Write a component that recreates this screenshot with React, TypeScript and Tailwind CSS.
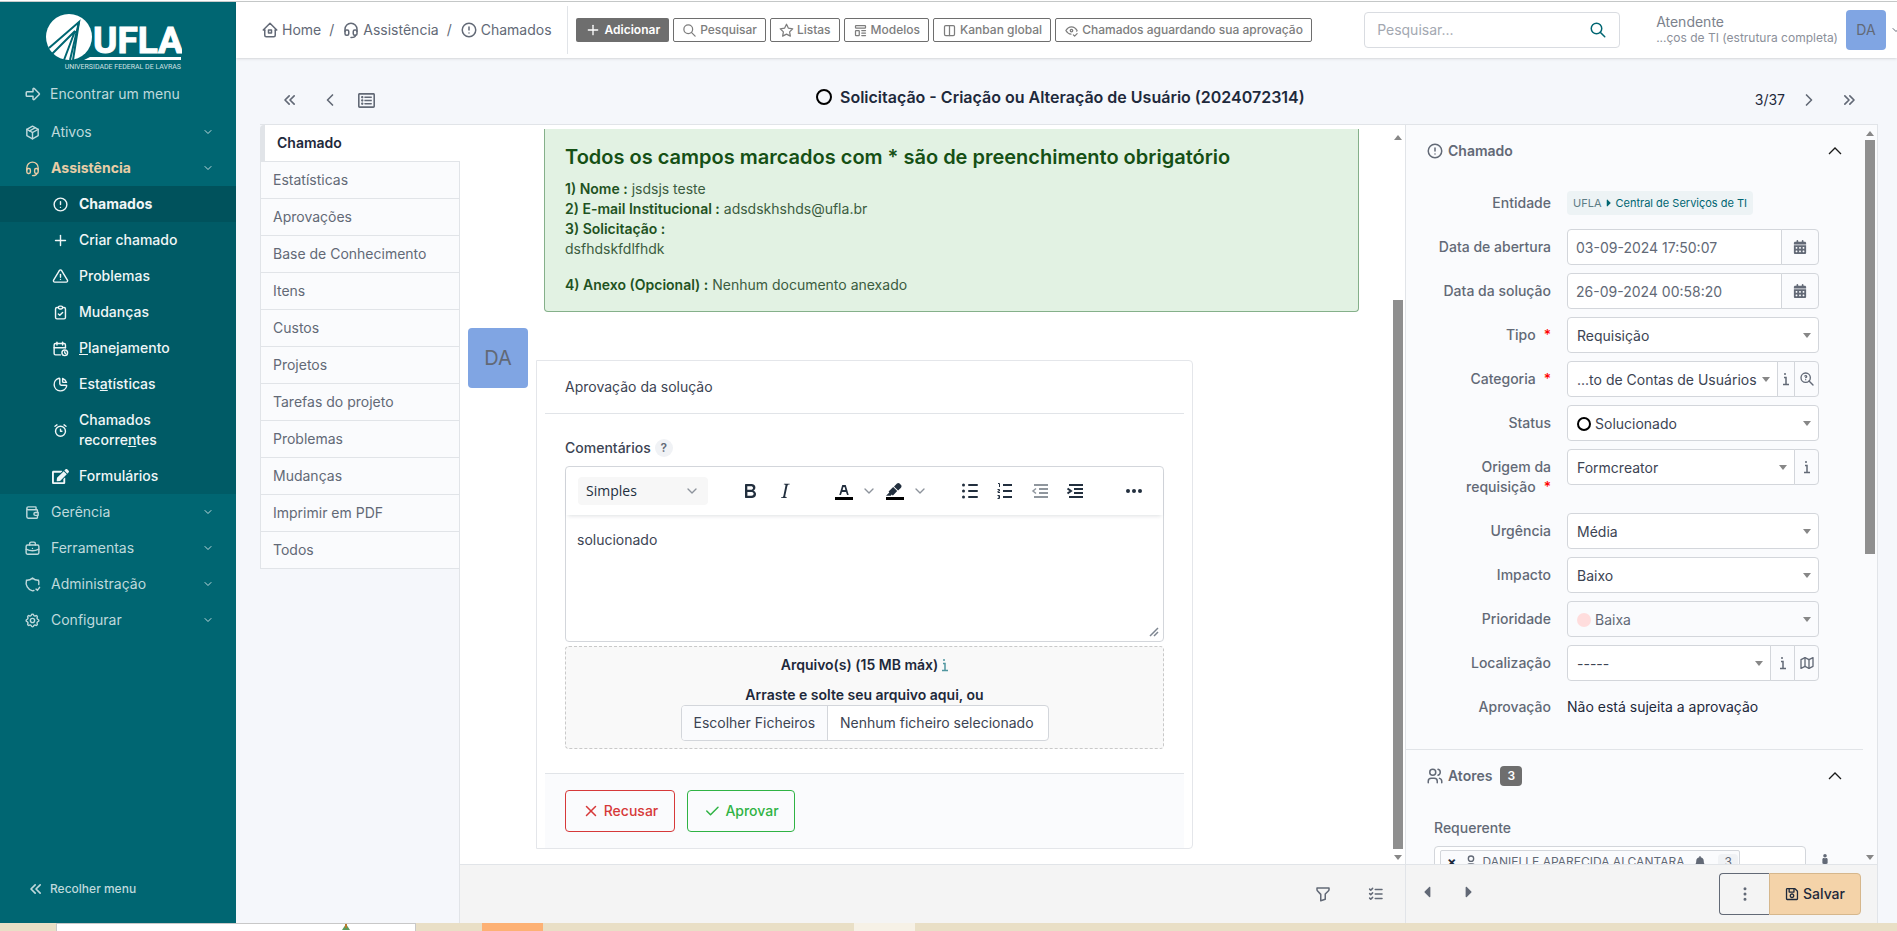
import type { ReactNode } from 'react';
import {
  TbAlarm,
  TbAlertCircle,
  TbAlertTriangle,
  TbArrowBigRight,
  TbBriefcase,
  TbCalendarTime,
  TbChartPie,
  TbCheck,
  TbChevronDown,
  TbChevronLeft,
  TbChevronRight,
  TbChevronsLeft,
  TbChevronsRight,
  TbClipboardCheck,
  TbDotsVertical,
  TbEyeCheck,
  TbFilter,
  TbHeadset,
  TbHome2,
  TbLayoutColumns,
  TbListCheck,
  TbMap,
  TbPackage,
  TbPlus,
  TbSearch,
  TbSettings,
  TbStar,
  TbTemplate,
  TbUser,
  TbUsers,
  TbWallet,
  TbX,
  TbZoomQuestion,
} from 'react-icons/tb';
import { FaBell, FaCaretLeft, FaCaretRight, FaEdit, FaMale, FaRegListAlt, FaRegSave } from 'react-icons/fa';
import { FaCalendarDays } from 'react-icons/fa6';

const submenu = [
  { icon: TbAlertCircle, label: 'Chamados', active: true },
  { icon: TbPlus, label: 'Criar chamado' },
  { icon: TbAlertTriangle, label: 'Problemas' },
  { icon: TbClipboardCheck, label: 'Mudanças' },
  { icon: TbCalendarTime, label: <><u>P</u>lanejamento</> },
  { icon: TbChartPie, label: <>Est<u>a</u>tísticas</> },
  { icon: TbAlarm, label: <>Chamados<br />recorre<u>n</u>tes</> },
  { icon: FaEdit, label: 'Formulários' },
];

const menuBottom = [
  { icon: TbWallet, label: 'Gerência' },
  { icon: TbBriefcase, label: 'Ferramentas' },
  { icon: ShieldIcon, label: 'Administração' },
  { icon: TbSettings, label: 'Configurar' },
];

const tabs = [
  'Estatísticas',
  'Aprovações',
  'Base de Conhecimento',
  'Itens',
  'Custos',
  'Projetos',
  'Tarefas do projeto',
  'Problemas',
  'Mudanças',
  'Imprimir em PDF',
  'Todos',
];

const actions = [
  { icon: TbSearch, label: 'Pesquisar' },
  { icon: TbStar, label: 'Listas' },
  { icon: TbTemplate, label: 'Modelos' },
  { icon: TbLayoutColumns, label: 'Kanban global' },
  { icon: TbEyeCheck, label: 'Chamados aguardando sua aprovação' },
];

function Logo() {
  return (
    <svg viewBox="0 0 136 58" className="h-[58px] w-[136px]" role="img" aria-label="UFLA">
      <circle cx="23" cy="23" r="23" fill="#fff" />
      <path d="M3 34 L33 8 L24 46 M6 40 L29 17 L18 46" fill="none" stroke="#006672" strokeWidth="2" />
      <path d="M33 8 L27 46" stroke="#006672" strokeWidth="2" />
      <path d="M44 43 H135 V46 H38 Z" fill="#fff" />
      <text x="92" y="39" textAnchor="middle" fill="#fff" stroke="#fff" strokeWidth="1" fontSize="37" fontWeight="700" fontFamily="Roboto, sans-serif">
        UFLA
      </text>
      <text x="135" y="55" textAnchor="end" fill="#cfe0e3" fontSize="7" fontFamily="Roboto, sans-serif">
        UNIVERSIDADE FEDERAL DE LAVRAS
      </text>
    </svg>
  );
}

function ShieldIcon({ className }: { className?: string }) {
  return (
    <svg viewBox="0 0 24 24" className={className} fill="none" stroke="currentColor" strokeWidth="2" strokeLinecap="round">
      <path d="M14 20.400 12 21A12 12 0 0 1 3.500 6A12 12 0 0 0 12 3A12 12 0 0 0 20.500 6A12 12 0 0 1 20.800 12" />
      <path d="M17 18.500 19 20 22 16" />
    </svg>
  );
}

function InfoIcon() {
  return (
    <svg viewBox="0 0 6 14" className="h-[14px] w-[6px] shrink-0" fill="none" stroke="currentColor" strokeWidth="1.500">
      <path d="M2 1 V3 M1 5.500 H3 V12 M0 12.500 H6" />
    </svg>
  );
}

function MenuItem({ icon: Icon, label, open }: { icon: any; label: string; open?: boolean }) {
  return (
    <a
      href="#"
      className={`flex h-9 items-center pl-6 pr-[22px] ${open ? 'font-bold text-[#e8cda6]' : 'text-[#bfd9dc]'}`}
    >
      <Icon className="size-[17px]" />
      <span className="ml-[10px] flex-1">{label}</span>
      <TbChevronDown className="size-3 text-[#bfd9dc]" />
    </a>
  );
}

function Sidebar() {
  return (
    <aside className="flex w-[236px] shrink-0 flex-col bg-[#006672]">
      <div className="pt-3 pl-[46px]">
        <Logo />
      </div>
      <a href="#" className="mt-1 mb-[2px] flex h-9 items-center gap-2 pl-6 text-[#bfd9dc]">
        <TbArrowBigRight className="size-[18px]" />
        Encontrar um menu
      </a>
      <MenuItem icon={TbPackage} label="Ativos" />
      <MenuItem icon={TbHeadset} label="Assistência" open />
      <nav className="bg-[#005b66]">
        {submenu.map(({ icon: Icon, label, active }, i) => (
          <a
            key={i}
            href="#"
            className={`flex items-center gap-[10px] py-2 pl-[52px] text-[#f0f6f7] ${active ? 'bg-[#00525c] font-bold' : 'font-medium'}`}
          >
            <Icon className="size-[17px]" />
            <span>{label}</span>
          </a>
        ))}
      </nav>
      {menuBottom.map((item) => (
        <MenuItem key={item.label} {...item} />
      ))}
      <button className="mt-auto mb-6 flex items-center gap-1 pl-[26px] text-xs font-medium text-[#bfd9dc]">
        <TbChevronsLeft className="size-5" />
        Recolher menu
      </button>
    </aside>
  );
}

function Header() {
  return (
    <header className="z-10 flex h-14 shrink-0 items-center bg-white pl-[25px] text-[#626976] shadow-sm">
      <nav className="flex items-center">
        <a href="#" className="flex items-center gap-[3px]"><TbHome2 className="size-[18px]" /> Home</a>
        <span className="px-2">/</span>
        <a href="#" className="flex items-center gap-[3px]"><TbHeadset className="size-[18px]" /> Assistência</a>
        <span className="px-2">/</span>
        <a href="#" className="flex items-center gap-[3px]"><TbAlertCircle className="size-[18px]" /> Chamados</a>
      </nav>
      <div className="mr-2 ml-[15px] h-12 w-px bg-[#e1e4e8]" />
      <div className="flex gap-1 text-xs font-medium">
        <button className="flex h-6 items-center gap-1 rounded-xs bg-[#6e6e6e] px-[9px] font-semibold text-white">
          <TbPlus className="size-4" /> Adicionar
        </button>
        {actions.map(({ icon: Icon, label }) => (
          <button key={label} className="flex h-6 items-center gap-[3px] rounded-xs border border-[#6e6e6e] px-2 text-[#7d7d7d]">
            <Icon className="size-[15px]" /> {label}
          </button>
        ))}
      </div>
      <div className="ml-auto flex h-9 w-64 items-center rounded-sm border border-[#d9dce1] pr-3 pl-3">
        <input type="text" placeholder="Pesquisar..." aria-label="Pesquisar" className="w-full min-w-0 flex-1 outline-none placeholder:text-[#a3a8b1]" />
        <button aria-label="Buscar"><TbSearch className="size-[18px] text-[#006672]" /></button>
      </div>
      <div className="ml-9 leading-4">
        <div className="text-[#7c828d]">Atendente</div>
        <div className="text-xs text-[#8b909a]">...ços de TI (estrutura completa)</div>
      </div>
      <div className="ml-2 flex size-10 items-center justify-center rounded-sm bg-[#80a5e3] text-[#626976]">DA</div>
      <TbChevronDown className="ml-1 -mr-[5px] size-3" />
    </header>
  );
}

function TitleBar() {
  return (
    <div className="flex h-[66px] shrink-0 items-center pr-5 pl-6 text-[#626976]">
      <div className="flex w-[130px] items-center gap-5 pt-[18px] pl-5">
        <TbChevronsLeft className="size-5" />
        <TbChevronLeft className="size-5" />
        <FaRegListAlt className="-ml-[2px] size-[17px]" />
      </div>
      <h1 className="flex flex-1 items-center justify-center gap-2 pt-3 pr-6 text-base font-semibold text-[#1e293b]">
        <span className="size-4 rounded-full border-2 border-black" />
        Solicitação - Criação ou Alteração de Usuário (2024072314)
      </h1>
      <div className="flex items-center gap-5 pt-[18px] pr-[18px]">
        <span className="-mr-[6px] text-[#1e293b]">3/37</span>
        <TbChevronRight className="size-5" />
        <TbChevronsRight className="size-5" />
      </div>
    </div>
  );
}

function Caret({ up, className = '' }: { up?: boolean; className?: string }) {
  return (
    <svg viewBox="0 0 8 5" className={`h-[5px] w-2 ${className}`} fill="#878787">
      <path d={up ? 'M0 5 L4 0 L8 5 Z' : 'M0 0 L4 5 L8 0 Z'} />
    </svg>
  );
}

function ToolButton({ label, children }: { label: string; children: ReactNode }) {
  return (
    <button aria-label={label} className="flex h-7 w-[35px] items-center justify-center text-[#222f3e]">
      <svg viewBox="0 0 24 24" className="size-6" fill="currentColor">{children}</svg>
    </button>
  );
}

function Editor() {
  return (
    <div className="rounded-sm border border-[#d3d6db]">
      <div className="flex h-12 items-center px-3 shadow-[0_3px_4px_-2px_rgba(34,47,62,0.15)]">
        <button className="flex h-7 w-[130px] items-center justify-between rounded-sm bg-[#f7f7f7] px-2 font-['Open_Sans',sans-serif] text-[#222f3e]">
          Simples
          <TbChevronDown className="size-4 text-[#8d939c]" />
        </button>
        <div className="ml-6 flex">
          <ToolButton label="Negrito">
            <path d="M7.800 19c-.3 0-.5 0-.6-.2l-.2-.5V5.700c0-.2 0-.4.2-.5l.6-.2h5c1.500 0 2.700.3 3.500 1 .7.600 1.100 1.400 1.100 2.500a3 3 0 0 1-.6 1.900c-.4.600-1 1-1.600 1.200.4.100.9.300 1.300.6s.8.700 1 1.200c.4.400.5 1 .5 1.600 0 1.300-.4 2.300-1.300 3-.8.700-2.100 1-3.800 1H7.800Zm5-8.300c.6 0 1.200-.1 1.600-.5.4-.3.6-.7.6-1.300 0-1.100-.8-1.700-2.300-1.700H9.300v3.500h3.400Zm.5 6c.7 0 1.300-.1 1.700-.4.4-.4.6-.9.6-1.500s-.2-1-.7-1.400c-.4-.3-1-.4-2-.4H9.400v3.800h4Z" />
          </ToolButton>
          <ToolButton label="Itálico">
            <path d="m16.700 4.700-.1.900h-.3c-.6 0-1 0-1.400.3-.3.300-.4.600-.5 1.100l-2.100 9.800v.6c0 .5.400.8 1.400.8h.2l-.2.800H8l.2-.8h.2c1.100 0 1.800-.5 2-1.500l2-9.800.1-.5c0-.6-.4-.8-1.400-.8h-.3l.2-.9h5.800Z" />
          </ToolButton>
        </div>
        <div className="ml-6 flex items-center">
          <ToolButton label="Cor do texto">
            <path d="M3 18h18v3H3z" fill="#000" />
            <path d="M8.700 16h-.8a.5.500 0 0 1-.5-.6l2.700-9c.1-.3.300-.4.500-.4h2.800c.2 0 .4.100.5.400l2.700 9a.5.500 0 0 1-.5.600h-.8a.5.500 0 0 1-.4-.4l-.7-2.200c0-.3-.3-.4-.5-.4h-3.400c-.2 0-.4.100-.5.400l-.7 2.200c0 .3-.2.400-.4.400Zm2.600-7.600-.6 2a.5.500 0 0 0 .5.600h1.600a.5.500 0 0 0 .5-.6l-.6-2c0-.3-.3-.4-.5-.4h-.4c-.2 0-.4.100-.5.400Z" />
          </ToolButton>
          <TbChevronDown className="size-4 text-[#8d939c]" />
          <ToolButton label="Cor de fundo">
            <path d="M3 18h18v3H3z" fill="#000" />
            <path d="M7.700 16.700H3l3.300-3.300-.7-.8L10.200 8l4 4.100-4 4.200c-.2.200-.6.200-.8 0l-.6-.7-1.100 1.100zm5-7.500L11 7.400l3-2.900a2 2 0 0 1 2.600 0L18 6c.7.700.7 2 0 2.700l-2.900 2.900-1.800-1.800-.5-.6" />
          </ToolButton>
          <TbChevronDown className="size-4 text-[#8d939c]" />
        </div>
        <div className="ml-6 flex">
          <ToolButton label="Lista de marcadores">
            <path d="M11 5h8a1 1 0 0 1 0 2h-8a1 1 0 0 1 0-2Zm0 6h8a1 1 0 0 1 0 2h-8a1 1 0 0 1 0-2Zm0 6h8a1 1 0 0 1 0 2h-8a1 1 0 0 1 0-2Z" />
            <circle cx="5.500" cy="6" r="1.500" />
            <circle cx="5.500" cy="12" r="1.500" />
            <circle cx="5.500" cy="18" r="1.500" />
          </ToolButton>
          <ToolButton label="Lista numerada">
            <path d="M10 5h9v2h-9zM10 11h9v2h-9zM10 17h9v2h-9z" />
            <path d="M5 4.500h1.500V8M4.500 10.500h2v1.500h-1.500v1.500h2M4.500 16.500h2v3h-2M5 18h1.500" fill="none" stroke="currentColor" />
          </ToolButton>
          <ToolButton label="Diminuir recuo">
            <g opacity=".5">
              <path d="M6 5h14v2H6zM11 9h9v2h-9zM11 13h9v2h-9zM6 17h14v2H6z" />
              <path d="M8 9.500 5 12l3 2.500" fill="none" stroke="currentColor" strokeWidth="1.500" />
            </g>
          </ToolButton>
          <ToolButton label="Aumentar recuo">
            <path d="M6 5h14v2H6zM11 9h9v2h-9zM11 13h9v2h-9zM6 17h14v2H6z" />
            <path d="M4.500 9.500 8 12l-3.500 2.500" fill="none" stroke="currentColor" strokeWidth="2" />
          </ToolButton>
        </div>
        <div className="ml-6">
          <ToolButton label="Mais">
            <circle cx="6" cy="12" r="2" />
            <circle cx="12" cy="12" r="2" />
            <circle cx="18" cy="12" r="2" />
          </ToolButton>
        </div>
      </div>
      <div className="relative">
        <textarea id="comentarios" defaultValue="solucionado" className="block h-[126px] w-full resize-none px-[11px] pt-[15px] text-[#3c4453] outline-none" />
        <svg viewBox="0 0 10 10" className="absolute right-1 bottom-1 size-[10px]" stroke="#7d8590" strokeWidth="1.500">
          <path d="M1 9 L9 1 M5 9 L9 5" />
        </svg>
      </div>
    </div>
  );
}

function SolutionCard() {
  return (
    <section className="w-[657px] rounded-r-sm border border-[#e4e6ea] px-2">
      <h2 className="border-b border-[#e1e4e8] px-5 pt-4 pb-4 text-[#3c4453]">Aprovação da solução</h2>
      <div className="px-5 pt-6 pb-6">
        <div className="mb-2 flex items-center gap-1">
          <label htmlFor="comentarios" className="font-medium text-[#3c4453]">Comentários</label>
          <span className="flex size-[18px] items-center justify-center rounded-full bg-[#f0f2f5] text-xs font-semibold text-[#626976]">?</span>
        </div>
        <Editor />
        <div className="mt-1 flex h-[103px] flex-col items-center rounded-sm border border-dashed border-[#c9c9c9] bg-[#f9f9f9] pt-2 font-semibold text-[#1e293b]">
          <div className="flex items-center gap-1">
            Arquivo(s) (15 MB máx) <span className="text-[#5096a0]"><InfoIcon /></span>
          </div>
          <div className="mt-[10px]">Arraste e solte seu arquivo aqui, ou</div>
          <label className="flex h-9 w-[368px] shrink-0 items-stretch overflow-hidden rounded-sm border border-[#d3d6db] bg-white font-normal text-[#3c4453]">
            <input type="file" multiple className="sr-only" />
            <span className="flex items-center border-r border-[#d3d6db] bg-[#fafbfd] px-3">Escolher Ficheiros</span>
            <span className="flex items-center px-3">Nenhum ficheiro selecionado</span>
          </label>
        </div>
      </div>
      <div className="flex gap-3 border-t border-[#e1e4e8] bg-[#fafbfd] px-5 py-4">
        <button className="flex h-[42px] w-[110px] items-center justify-center gap-1 rounded-sm border border-[#d63939] font-medium text-[#d63939]">
          <TbX className="size-[18px]" /> Recusar
        </button>
        <button className="flex h-[42px] w-[108px] items-center justify-center gap-1 rounded-sm border border-[#2fb344] font-medium text-[#2fb344]">
          <TbCheck className="size-[18px]" /> Aprovar
        </button>
      </div>
    </section>
  );
}

function Timeline() {
  return (
    <main className="flex min-w-0 flex-1 flex-col border-r border-[#e1e4e8]">
      <div className="flex min-h-0 flex-1 bg-white">
        <div className="min-w-0 flex-1 overflow-hidden pt-1 pl-2">
          <div className="mr-8 ml-[76px] rounded-b-sm border border-t-0 border-[#85b08a] bg-[#e2f2e3] px-5 pt-4 pb-4 text-[#3b5c40]">
            <h2 className="mb-[10px] text-xl leading-6 font-semibold text-[#155015]">
              Todos os campos marcados com * são de preenchimento obrigatório
            </h2>
            <p><b className="font-semibold text-[#1f5222]">1) Nome :</b> jsdsjs teste</p>
            <p><b className="font-semibold text-[#1f5222]">2) E-mail Institucional :</b> adsdskhshds@ufla.br</p>
            <p><b className="font-semibold text-[#1f5222]">3) Solicitação :</b></p>
            <p>dsfhdskfdlfhdk</p>
            <p className="mt-4"><b className="font-semibold text-[#1f5222]">4) Anexo (Opcional) :</b> Nenhum documento anexado</p>
          </div>
          <div className="mt-4 flex gap-2">
            <div className="flex size-[60px] shrink-0 items-center justify-center rounded-sm bg-[#80a5e3] text-xl text-[#626976]">DA</div>
            <div className="pt-8">
              <SolutionCard />
            </div>
          </div>
        </div>
        <div className="flex w-[14px] flex-col items-center pt-[10px] pb-1">
          <Caret up />
          <div className="mt-[160px] w-[10px] flex-1 bg-[#8f8f8f]" />
          <Caret className="mt-[6px]" />
        </div>
      </div>
      <div className="flex h-[59px] shrink-0 items-center justify-end gap-[35px] border-t border-[#e1e4e8] bg-[#f4f4f4] pr-5 text-[#626976]">
        <TbFilter className="size-[18px]" />
        <TbListCheck className="size-[18px]" />
      </div>
    </main>
  );
}

function Field({ label, id, required, children }: { label: string; id?: string; required?: boolean; children: ReactNode }) {
  return (
    <div className="mb-2 flex min-h-9">
      <label htmlFor={id} className="w-[145px] shrink-0 py-2 pl-8 text-right font-medium text-[#626976]">
        {label}
        {required && <span className="ml-2 text-[#ff0000]">*</span>}
      </label>
      <div className="ml-4 flex min-h-9 w-[252px] items-center self-start">{children}</div>
    </div>
  );
}

function Select({ id, value, dot, disabled, joined }: { id: string; value: string; dot?: string; disabled?: boolean; joined?: boolean }) {
  return (
    <div className={`relative flex h-9 min-w-0 flex-1 items-center border border-[#d3d6db] pt-px pl-[9px] ${disabled ? 'bg-[#fafbfd] text-[#626976]' : 'bg-white text-[#3c4453]'} ${joined ? 'rounded-l-sm' : 'rounded-sm'}`}>
      {dot && <span className={`mr-1 size-[14px] shrink-0 rounded-full ${dot}`} />}
      <select id={id} disabled={disabled} className="w-full appearance-none truncate pr-4 opacity-100 outline-none">
        <option>{value}</option>
      </select>
      <Caret className="pointer-events-none absolute right-[7px]" />
    </div>
  );
}

function Addon({ label, className, children }: { label: string; className: string; children: ReactNode }) {
  return (
    <button aria-label={label} className={`-ml-px flex h-9 items-center justify-center border border-[#d3d6db] bg-[#fafbfd] text-[#626976] last:rounded-r-sm ${className}`}>
      {children}
    </button>
  );
}

function DateInput({ id, value }: { id: string; value: string }) {
  return (
    <>
      <input id={id} type="text" defaultValue={value} className="h-9 min-w-0 flex-1 rounded-l-sm border border-[#d3d6db] bg-white px-2 text-[#626976] outline-none" />
      <Addon label="Abrir calendário" className="w-[38px]"><FaCalendarDays className="size-[14px]" /></Addon>
    </>
  );
}

function SectionHead({ icon: Icon, label, badge }: { icon: any; label: string; badge?: string }) {
  return (
    <div className="flex h-[52px] items-center pr-[21px] pl-5 font-semibold text-[#626976]">
      <Icon className="size-[18px]" />
      <span className="ml-1">{label}</span>
      {badge && <span className="ml-2 flex h-5 w-[22px] items-center justify-center rounded-sm bg-[#6e6e6e] text-xs text-white">{badge}</span>}
      <button aria-label={`Recolher ${label}`} className="ml-auto">
        <svg viewBox="0 0 14 8" className="h-2 w-[14px]" fill="none" stroke="#1a1a1a" strokeWidth="1.300">
          <path d="M1 7 L7 1 L13 7" />
        </svg>
      </button>
    </div>
  );
}

function DetailsPanel() {
  return (
    <aside className="flex w-[472px] shrink-0 flex-col border-r border-[#e1e4e8] bg-[#fafbfd]">
      <div className="flex min-h-0 flex-1">
        <div className="min-w-0 flex-1 overflow-hidden">
          <SectionHead icon={TbAlertCircle} label="Chamado" />
          <div className="border-b border-[#e1e4e8] pt-2 pb-4">
            <Field label="Entidade">
              <span className="flex h-6 items-center gap-px rounded-sm bg-[#edf3f5] px-[6px] text-[11px] text-[#006672]">
                <span className="text-[#5e7d86]">UFLA</span> <FaCaretRight className="size-3" /> Central de Serviços de TI
              </span>
            </Field>
            <Field label="Data de abertura" id="abertura"><DateInput id="abertura" value="03-09-2024 17:50:07" /></Field>
            <Field label="Data da solução" id="solucao"><DateInput id="solucao" value="26-09-2024 00:58:20" /></Field>
            <Field label="Tipo" id="tipo" required><Select id="tipo" value="Requisição" /></Field>
            <Field label="Categoria" id="categoria" required>
              <Select id="categoria" value="...to de Contas de Usuários" joined />
              <Addon label="Informação" className="w-[18px]"><InfoIcon /></Addon>
              <Addon label="Pesquisar na base" className="w-[25px]"><TbZoomQuestion className="size-4" /></Addon>
            </Field>
            <Field label="Status" id="status"><Select id="status" value="Solucionado" dot="border-2 border-black" /></Field>
            <Field label="Origem da requisição" id="origem" required>
              <Select id="origem" value="Formcreator" joined />
              <Addon label="Informação" className="w-[25px]"><InfoIcon /></Addon>
            </Field>
            <Field label="Urgência" id="urgencia"><Select id="urgencia" value="Média" /></Field>
            <Field label="Impacto" id="impacto"><Select id="impacto" value="Baixo" /></Field>
            <Field label="Prioridade" id="prioridade"><Select id="prioridade" value="Baixa" dot="bg-[#ffdddd]" disabled /></Field>
            <Field label="Localização" id="local">
              <Select id="local" value="-----" joined />
              <Addon label="Informação" className="w-[25px]"><InfoIcon /></Addon>
              <Addon label="Mapa" className="w-[25px]"><TbMap className="size-4" /></Addon>
            </Field>
            <Field label="Aprovação"><span className="text-[#1e293b]">Não está sujeita a aprovação</span></Field>
          </div>
          <SectionHead icon={TbUsers} label="Atores" badge="3" />
          <div className="pt-4 pl-7">
            <div className="mb-2 font-medium text-[#626976]">Requerente</div>
            <div className="flex items-start gap-3 text-[#626976]">
              <div className="w-[372px] rounded-sm border border-[#d3d6db] bg-white p-[5px] pt-[3px]">
                <div className="flex h-6 w-[300px] items-center rounded-xs border border-[#d3d6db] bg-[#fafbfd] pl-[6px]">
                  <b className="text-[#1e293b]">×</b>
                  <TbUser className="ml-[6px] size-4 shrink-0" />
                  <span className="ml-1 text-xs whitespace-nowrap">DANIELLE APARECIDA ALCANTARA</span>
                  <FaBell className="ml-[10px] size-3 shrink-0" />
                  <span className="ml-3 rounded-sm bg-[#f0f2f5] px-[6px] text-xs">3</span>
                </div>
              </div>
              <FaMale className="mt-2 size-[14px]" />
            </div>
          </div>
        </div>
        <div className="flex w-[14px] flex-col items-center pt-[6px] pb-1">
          <Caret up />
          <div className="mt-1 h-[414px] w-[10px] bg-[#8f8f8f]" />
          <Caret className="mt-auto" />
        </div>
      </div>
      <div className="flex h-[59px] shrink-0 items-center border-t border-[#e1e4e8] bg-[#f4f4f4] pr-4 pl-3 text-[#626976]">
        <button aria-label="Anterior"><FaCaretLeft className="mb-1 size-[18px]" /></button>
        <button aria-label="Próximo" className="ml-6"><FaCaretRight className="mb-1 size-[18px]" /></button>
        <button aria-label="Mais ações" className="ml-auto flex h-[42px] w-[50px] items-center justify-center rounded-l-sm border border-r-0 border-[#626976]">
          <TbDotsVertical className="size-[18px]" />
        </button>
        <button className="flex h-[42px] w-[92px] items-center justify-center gap-1 rounded-r-sm border border-[#d6b78c] bg-[#f4d3a9] font-medium text-[#1e293b]">
          <FaRegSave className="size-[14px]" /> Salvar
        </button>
      </div>
    </aside>
  );
}

export default function App() {
  return (
    <div className="flex h-screen flex-col overflow-hidden bg-[#f5f7fb] font-[Inter,sans-serif] text-sm leading-5">
      <div className="h-[2px] shrink-0 border-b border-[#c8cbcb] bg-white" />
      <div className="flex min-h-0 flex-1">
        <Sidebar />
        <div className="flex min-w-0 flex-1 flex-col">
          <Header />
          <TitleBar />
          <div className="mr-[19px] ml-6 flex min-h-0 flex-1 border-t border-[#e1e4e8]">
            <nav className="w-[200px] shrink-0 border-r border-[#e1e4e8] text-[#626976]">
              <a href="#" className="-mr-px flex h-9 items-center rounded-tl-sm border-l-[5px] border-[#e1e4e8] bg-white pl-3 font-semibold text-[#1e293b]">
                Chamado
              </a>
              {tabs.map((tab) => (
                <a key={tab} href="#" className="flex h-[37px] items-center border-t border-l border-[#e1e4e8] bg-[#fafbfd] pl-3 last:h-[38px] last:border-b">
                  {tab}
                </a>
              ))}
            </nav>
            <Timeline />
            <DetailsPanel />
          </div>
        </div>
      </div>
      {/* Taskbar edge */}
      <div className="flex h-2 shrink-0 bg-[#e9dfc6]">
        <div className="ml-14 flex w-[360px] justify-center border border-b-0 border-[#c8c8c8] bg-white">
          <svg viewBox="0 0 8 6" className="ml-[220px] h-[6px] w-2">
            <path d="M4 0 L8 6 H0 Z" fill="#5c9a5c" />
            <path d="M3 0 H5 V4 H3 Z" fill="#b8792c" />
          </svg>
        </div>
        <div className="ml-[66px] w-[61px] bg-[#fdb174]" />
        <div className="ml-[311px] w-[61px] bg-[#f6f1e6]" />
      </div>
    </div>
  );
}
